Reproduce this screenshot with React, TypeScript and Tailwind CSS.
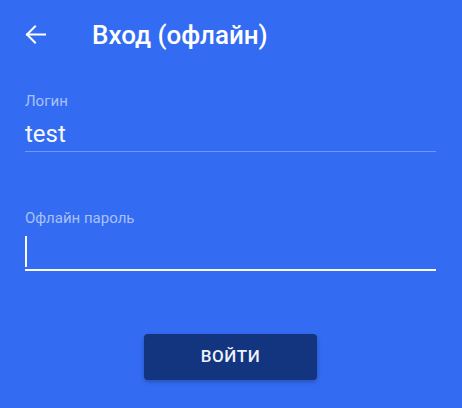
import React from "react";

const App: React.FC = () => {
  return (
    <div className="w-[462px] h-[408px] bg-[#336cf2] font-['Roboto',sans-serif] text-white overflow-hidden">
      {/* header */}
      <div className="flex items-center h-[69px] pl-[25px]">
        <svg width="21" height="21" viewBox="0 0 21 21" fill="none" stroke="#ffffff" strokeWidth="2" strokeLinecap="square">
          <path d="M20 10.5H2" />
          <path d="M10 2.5L2 10.5L10 18.5" />
        </svg>
        <h1 className="ml-[46px] text-[26px] font-medium leading-[32px] text-white">Вход (офлайн)</h1>
      </div>

      {/* form */}
      <div className="pl-[25px] pr-[26px]">
        <div className="mt-[23px]">
          <div className="text-[15px] leading-[18px] text-[#a9c1f8]">Логин</div>
          <div className="mt-[8px] h-[34px] border-b border-[#6e97f6] text-[24px] leading-[33px] text-[#f7f9ff]">
            test
          </div>
        </div>

        <div className="mt-[57px]">
          <div className="text-[15px] leading-[18px] text-[#a9c1f8]">Офлайн пароль</div>
          <div className="h-[44px] pt-[9px] border-b-2 border-[#f7f9ff]">
            <div className="w-[2px] h-[31px] bg-[#f7f9ff]" />
          </div>
        </div>

        <div className="flex justify-center mt-[63px]">
          <button className="w-[173px] h-[46px] rounded-[4px] bg-[#13347f] shadow-[0_2px_4px_rgba(0,0,0,0.25)] text-[17px] font-medium tracking-[0.5px] text-[#eef2fb]">
            ВОЙТИ
          </button>
        </div>
      </div>
    </div>
  );
};

export default App;
